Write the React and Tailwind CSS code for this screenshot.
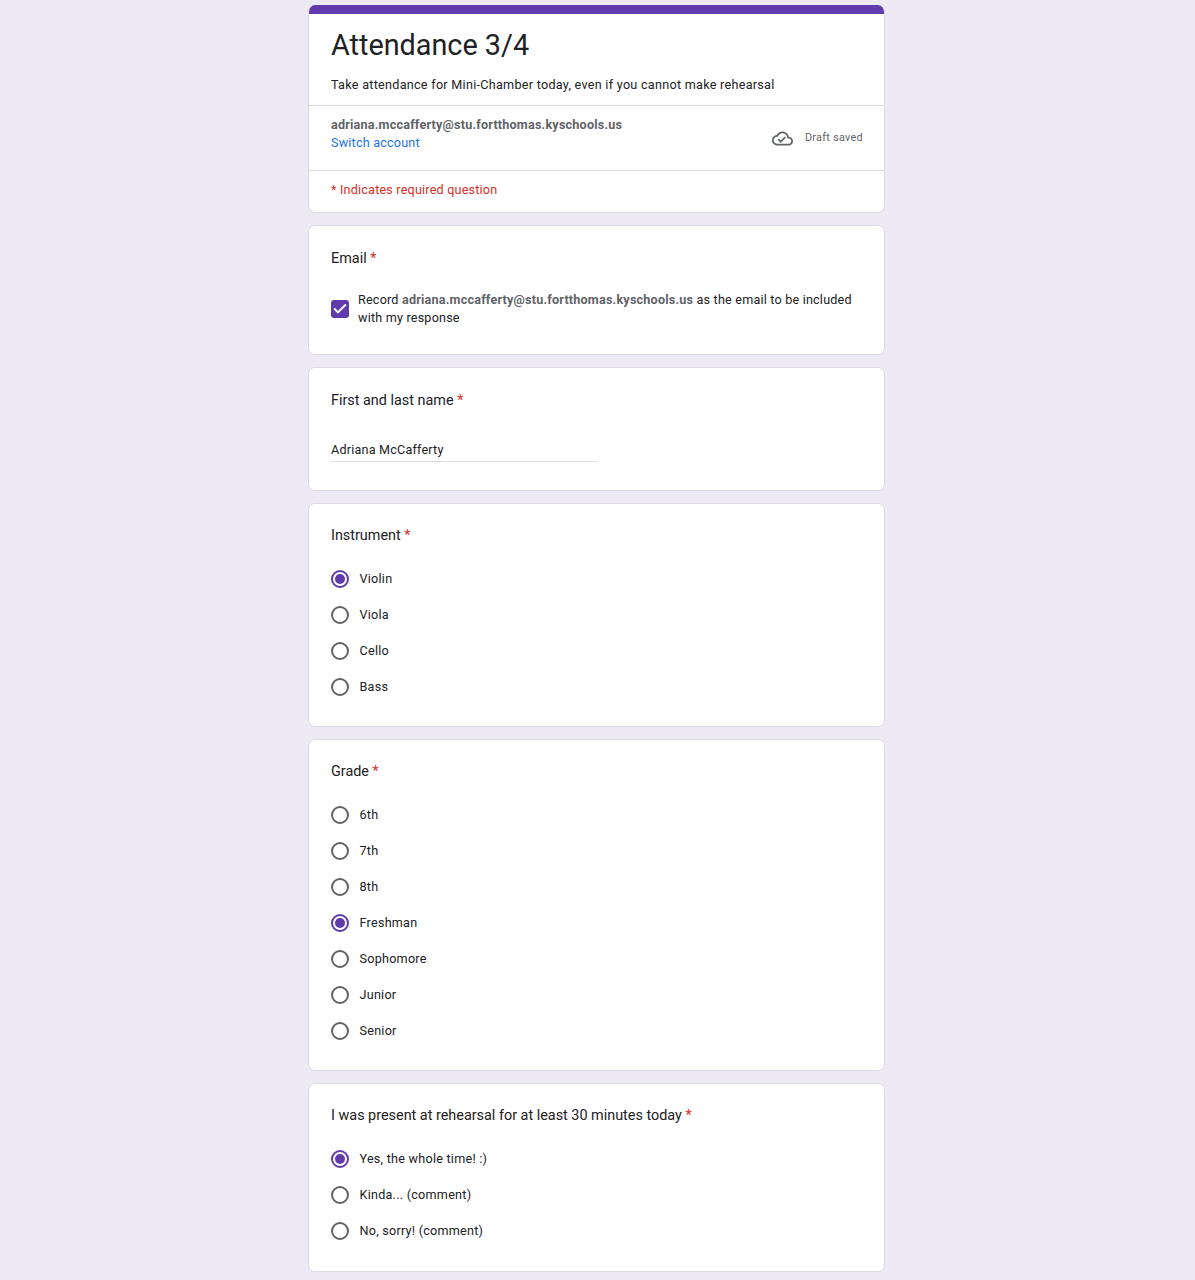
import { Check } from "lucide-react";

const font = { fontFamily: "Roboto, sans-serif" };

function Card({ children, className = "" }) {
    return (
        <section className={`rounded-[7px] border border-[#dadce0] bg-white ${className}`}>
            {children}
        </section>
    );
}

function Question({ children }) {
    return (
        <div className="text-[14.4px] leading-[22px] text-[#202124]">
            {children} <span className="text-[#d93025]">*</span>
        </div>
    );
}

function Radio({ label, checked }) {
    return (
        <div className="flex h-9 items-center gap-[10.5px]">
            <div
                className={`flex h-[18px] w-[18px] items-center justify-center rounded-full border-2 ${
                    checked ? "border-[#5f3bad]" : "border-[#5f6368]"
                }`}
            >
                {checked && <div className="h-[10px] w-[10px] rounded-full bg-[#5f3bad]" />}
            </div>
            <span className="text-[12.6px] tracking-[0.25px] text-[#202124]">{label}</span>
        </div>
    );
}

function RadioQuestion({ title, options, selected, className = "" }) {
    return (
        <Card className={`px-[22px] pt-[21px] ${className}`}>
            <Question>{title}</Question>
            <div className="mt-[14px]">
                {options.map((o) => (
                    <Radio key={o} label={o} checked={o === selected} />
                ))}
            </div>
        </Card>
    );
}

export default function App() {
    return (
        <div className="min-h-[1280px] bg-[#edeaf6] pt-[5px]" style={font}>
            <main className="ml-[308px] flex w-[577px] flex-col gap-[12px]">
                <Card className="h-[208px] overflow-hidden border-t-0">
                    <div className="h-[9px] bg-[#5f3bad]" />
                    <div className="h-[92px] border-b border-[#dadce0] px-[22px]">
                        <h1 className="pt-[12px] text-[28.8px] leading-[38px] text-[#202124]">Attendance 3/4</h1>
                        <p className="mt-[12px] text-[12.6px] leading-[18px] tracking-[0.28px] text-[#202124]">
                            Take attendance for Mini-Chamber today, even if you cannot make rehearsal
                        </p>
                    </div>
                    <div className="flex h-[65px] items-center justify-between border-b border-[#dadce0] pl-[22px] pr-[21px]">
                        <div className="mb-[8px] text-[12.6px] leading-[18px] tracking-[0.2px]">
                            <div className="font-bold text-[#5f6368]">adriana.mccafferty@stu.fortthomas.kyschools.us</div>
                            <div className="text-[#1a73e8]">Switch account</div>
                        </div>
                        <div className="flex items-center gap-[12px]">
                            <svg width="21" height="21" viewBox="0 0 24 24" fill="#5f6368">
                                <path d="M19.35 10.04C18.67 6.59 15.64 4 12 4 9.11 4 6.6 5.64 5.35 8.04 2.34 8.36 0 10.91 0 14c0 3.31 2.69 6 6 6h13c2.76 0 5-2.24 5-5 0-2.64-2.05-4.78-4.65-4.96zM19 18H6c-2.21 0-4-1.79-4-4 0-2.05 1.53-3.76 3.56-3.97l1.07-.11.5-.95C8.08 7.14 9.94 6 12 6c2.62 0 4.88 1.86 5.39 4.43l.3 1.5 1.53.11c1.56.1 2.78 1.41 2.78 2.96 0 1.65-1.35 3-3 3zm-9-3.82l-2.09-2.09L6.5 13.5 10 17l6.01-6.01-1.41-1.41z" />
                            </svg>
                            <span className="text-[10.8px] tracking-[0.3px] text-[#5f6368]">Draft saved</span>
                        </div>
                    </div>
                    <div className="px-[22px] pt-[10px] text-[12.6px] leading-[18px] tracking-[0.2px] text-[#d93025]">
                        * Indicates required question
                    </div>
                </Card>

                <Card className="h-[130px] px-[22px] pt-[22px]">
                    <Question>Email</Question>
                    <div className="mt-[21px] flex items-center gap-[9px]">
                        <div className="flex h-[18px] w-[18px] shrink-0 items-center justify-center rounded-[3px] bg-[#5f3bad]">
                            <Check size={16} color="#fff" strokeWidth={3} />
                        </div>
                        <p className="text-[12.6px] leading-[18px] tracking-[0.2px] text-[#202124]">
                            Record <b className="text-[#5f6368]">adriana.mccafferty@stu.fortthomas.kyschools.us</b> as the email to be included with my response
                        </p>
                    </div>
                </Card>

                <Card className="h-[124px] px-[22px] pt-[22px]">
                    <Question>First and last name</Question>
                    <div className="mt-[29px] w-[266px] border-b border-[#dadce0] pb-[2px] text-[12.6px] leading-[18px] tracking-[0.2px] text-[#202124]">
                        Adriana McCafferty
                    </div>
                </Card>

                <RadioQuestion className="h-[224px]" title="Instrument" options={["Violin", "Viola", "Cello", "Bass"]} selected="Violin" />
                <RadioQuestion
                    className="h-[332px]"
                    title="Grade"
                    options={["6th", "7th", "8th", "Freshman", "Sophomore", "Junior", "Senior"]}
                    selected="Freshman"
                />
                <RadioQuestion
                    className="h-[188.5px]"
                    title="I was present at rehearsal for at least 30 minutes today"
                    options={["Yes, the whole time! :)", "Kinda... (comment)", "No, sorry! (comment)"]}
                    selected="Yes, the whole time! :)"
                />
            </main>
        </div>
    );
}
